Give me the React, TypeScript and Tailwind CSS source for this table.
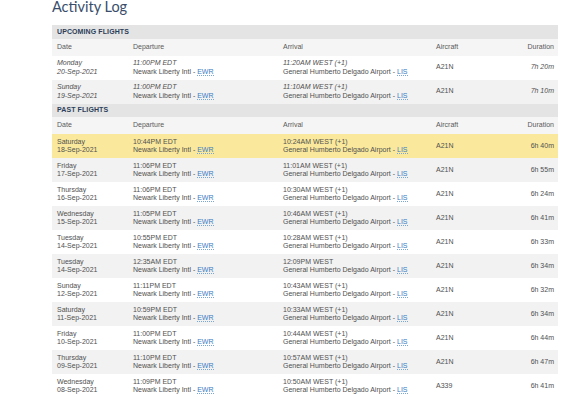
import React from "react";

type Flight = {
  day: string;
  date: string;
  dep: string;
  arr: string;
  ac: string;
  dur: string;
};

const upcoming: Flight[] = [
  { day: "Monday", date: "20-Sep-2021", dep: "11:00PM EDT", arr: "11:20AM WEST (+1)", ac: "A21N", dur: "7h 20m" },
  { day: "Sunday", date: "19-Sep-2021", dep: "11:00PM EDT", arr: "11:10AM WEST (+1)", ac: "A21N", dur: "7h 10m" },
];

const past: Flight[] = [
  { day: "Saturday", date: "18-Sep-2021", dep: "10:44PM EDT", arr: "10:24AM WEST (+1)", ac: "A21N", dur: "6h 40m" },
  { day: "Friday", date: "17-Sep-2021", dep: "11:06PM EDT", arr: "11:01AM WEST (+1)", ac: "A21N", dur: "6h 55m" },
  { day: "Thursday", date: "16-Sep-2021", dep: "11:06PM EDT", arr: "10:30AM WEST (+1)", ac: "A21N", dur: "6h 24m" },
  { day: "Wednesday", date: "15-Sep-2021", dep: "11:05PM EDT", arr: "10:46AM WEST (+1)", ac: "A21N", dur: "6h 41m" },
  { day: "Tuesday", date: "14-Sep-2021", dep: "10:55PM EDT", arr: "10:28AM WEST (+1)", ac: "A21N", dur: "6h 33m" },
  { day: "Tuesday", date: "14-Sep-2021", dep: "12:35AM EDT", arr: "12:09PM WEST", ac: "A21N", dur: "6h 34m" },
  { day: "Sunday", date: "12-Sep-2021", dep: "11:11PM EDT", arr: "10:43AM WEST (+1)", ac: "A21N", dur: "6h 32m" },
  { day: "Saturday", date: "11-Sep-2021", dep: "10:59PM EDT", arr: "10:33AM WEST (+1)", ac: "A21N", dur: "6h 34m" },
  { day: "Friday", date: "10-Sep-2021", dep: "11:00PM EDT", arr: "10:44AM WEST (+1)", ac: "A21N", dur: "6h 44m" },
  { day: "Thursday", date: "09-Sep-2021", dep: "11:10PM EDT", arr: "10:57AM WEST (+1)", ac: "A21N", dur: "6h 47m" },
  { day: "Wednesday", date: "08-Sep-2021", dep: "11:09PM EDT", arr: "10:50AM WEST (+1)", ac: "A339", dur: "6h 41m" },
];

const grid = "grid grid-cols-[76px_150px_153px_1fr_auto] pl-[5px] pr-[4px]";

function Code({ children }: { children: React.ReactNode }) {
  return (
    <span className="text-[#3b7bc2] border-b border-dotted border-[#7aa6d6] leading-[7px]">{children}</span>
  );
}

function SectionHeader({ title }: { title: string }) {
  return (
    <div className="h-[13.5px] bg-[#e4e4e4] flex items-center pl-[5px] text-[7px] font-bold text-[#2d3e5a] tracking-[0.1px]">
      {title}
    </div>
  );
}

function ColHeader() {
  return (
    <div className={`${grid} h-[17px] items-center bg-[#f5f5f5] text-[7px] text-[#5a5a5a]`}>
      <div>Date</div>
      <div>Departure</div>
      <div>Arrival</div>
      <div>Aircraft</div>
      <div className="text-right">Duration</div>
    </div>
  );
}

function Row({ f, italic, bg }: { f: Flight; italic: boolean; bg: string }) {
  const it = italic ? "italic" : "";
  return (
    <div className={`${grid} h-[24px] items-center text-[7px] leading-[8.4px] text-[#505050] ${bg}`}>
      <div className={it}>
        <div>{f.day}</div>
        <div>{f.date}</div>
      </div>
      <div>
        <div className={it}>{f.dep}</div>
        <div>
          Newark Liberty Intl - <Code>EWR</Code>
        </div>
      </div>
      <div>
        <div className={it}>{f.arr}</div>
        <div>
          General Humberto Delgado Airport - <Code>LIS</Code>
        </div>
      </div>
      <div>{f.ac}</div>
      <div className={`text-right ${it}`}>{f.dur}</div>
    </div>
  );
}

export default function App() {
  return (
    <div className="w-[580px] h-[397px] overflow-hidden bg-white" style={{ fontFamily: '"Liberation Sans", Arial, sans-serif' }}>
      <div className="pl-[52px] w-[558px]">
        <h1
          className="text-[14.5px] leading-[14px] text-[#3a4e6b] font-normal"
          style={{ fontFamily: 'Lato, "Open Sans", sans-serif' }}
        >
          Activity Log
        </h1>
        <div className="mt-[11px]">
          <SectionHeader title="UPCOMING FLIGHTS" />
          <ColHeader />
          {upcoming.map((f, i) => (
            <Row key={i} f={f} italic bg={i % 2 === 0 ? "bg-white" : "bg-[#f2f2f2]"} />
          ))}
          <SectionHeader title="PAST FLIGHTS" />
          <ColHeader />
          {past.map((f, i) => (
            <Row
              key={i}
              f={f}
              italic={false}
              bg={i === 0 ? "bg-[#fae99c]" : i % 2 === 1 ? "bg-[#f2f2f2]" : "bg-white"}
            />
          ))}
        </div>
      </div>
    </div>
  );
}
